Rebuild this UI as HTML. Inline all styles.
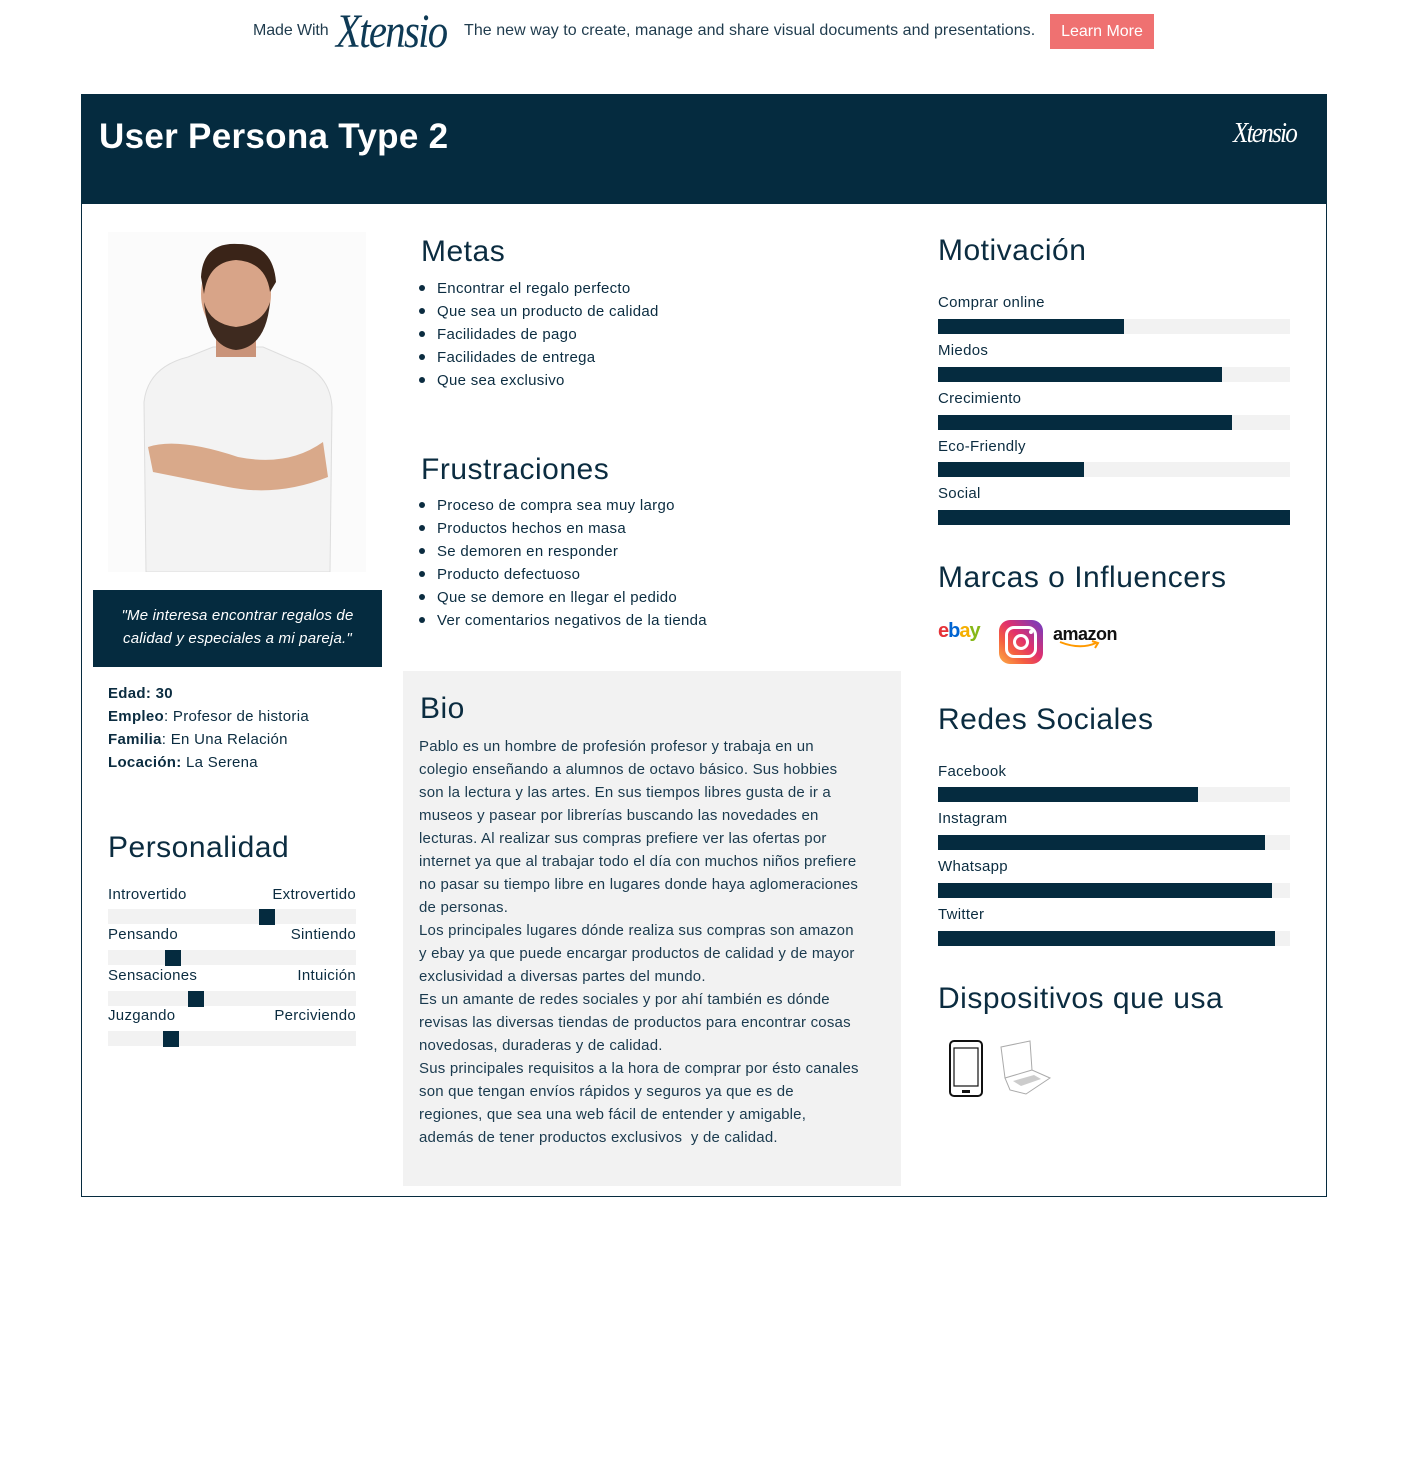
<!DOCTYPE html>
<html><head><meta charset="utf-8">
<style>
*{margin:0;padding:0;box-sizing:border-box}
body{width:1407px;height:1463px;background:#fff;font-family:"Liberation Sans",sans-serif;color:#0b2c40;position:relative;overflow:hidden}
.a{position:absolute}
.top{font-size:16px;color:#1f3b4d;letter-spacing:-0.1px}
.card{left:81px;top:94px;width:1246px;height:1103px;border:1px solid #062b3f}
.hdr{left:81px;top:94px;width:1246px;height:110px;background:#052b3f}
h2{position:absolute;font-weight:normal;font-size:30px;letter-spacing:0.5px;color:#0b2c40}
ul{position:absolute;list-style:none;font-size:15px;letter-spacing:0.3px}
ul li{height:23px;line-height:23px;padding-left:18px;position:relative}
ul li:before{content:"";position:absolute;left:0;top:8px;width:6px;height:6px;border-radius:50%;background:#0b2c40}
.lbl{position:absolute;font-size:15px;letter-spacing:0.3px}
.r{text-align:right;width:150px}
.bar{position:absolute;height:15px;background:#f2f2f2;width:352px;left:938px}
.bar i{position:absolute;left:0;top:0;bottom:0;background:#052b3f}
.sl{position:absolute;left:108px;width:248px;height:15px;background:#f2f2f2}
.sl i{position:absolute;top:0;width:16px;height:16px;background:#052b3f}
.bio{white-space:nowrap;font-size:15px;line-height:23px;letter-spacing:0.2px;color:#1a3a4e}
</style></head><body>
<div class="a top" style="left:253px;top:22px">Made With</div>
<div class="a" style="left:336px;top:4px;font-family:'Liberation Serif',serif;font-style:italic;font-size:48px;color:#0e3a55;letter-spacing:-2px;transform:scaleX(0.85);transform-origin:left">Xtensio</div>
<div class="a top" style="left:464px;top:22px;letter-spacing:0.05px">The new way to create, manage and share visual documents and presentations.</div>
<div class="a" style="left:1050px;top:14px;width:104px;height:35px;background:#ef7171;color:#fff;font-size:16px;line-height:35px;text-align:center">Learn More</div>

<div class="a card"></div>
<div class="a hdr"></div>
<div class="a" style="left:99px;top:117px;color:#fff;font-size:35px;font-weight:bold;letter-spacing:0.3px">User Persona Type 2</div>
<div class="a" style="left:1233px;top:118px;color:#fff;font-family:'Liberation Serif',serif;font-style:italic;font-size:28px;letter-spacing:-2px;transform:scaleX(0.9);transform-origin:left">Xtensio</div>

<div class="a" style="left:108px;top:232px;width:258px;height:340px;background:#fbfbfb">
<svg width="258" height="340" viewBox="0 0 258 340">
<path d="M38 340 L36 170 Q40 135 80 125 L105 115 L155 115 L185 128 Q222 140 224 175 L222 340Z" fill="#f3f3f3" stroke="#ddd"/>
<path d="M40 215 Q70 205 130 225 Q180 235 215 210 L220 245 Q170 265 120 255 Q70 245 45 240Z" fill="#d9a98a"/>
<rect x="108" y="85" width="40" height="40" fill="#c99379"/>
<ellipse cx="128" cy="62" rx="35" ry="45" fill="#d8a488"/>
<path d="M93 45 Q95 10 130 12 Q165 12 168 50 L162 60 Q158 30 128 28 Q100 30 96 62Z" fill="#3a2418"/>
<path d="M96 70 Q100 115 128 118 Q158 115 162 70 Q155 92 128 95 Q102 92 96 70Z" fill="#3e2a1f"/>
</svg></div>
<div class="a" style="left:93px;top:590px;width:289px;height:77px;background:#052b3f;color:#fff;font-style:italic;font-size:15px;line-height:23px;text-align:center;padding-top:14px;letter-spacing:0.2px">"Me interesa encontrar regalos de<br>calidad y especiales a mi pareja."</div>
<div class="a" style="left:108px;top:682px;font-size:15px;line-height:23px;letter-spacing:0.3px">
<b>Edad: 30</b><br><b>Empleo</b>: Profesor de historia<br><b>Familia</b>: En Una Relación<br><b>Locación:</b> La Serena</div>

<h2 style="left:108px;top:831px">Personalidad</h2>
<div class="lbl" style="left:108px;top:886px">Introvertido</div><div class="lbl r" style="left:206px;top:886px">Extrovertido</div>
<div class="sl" style="top:909px"><i style="left:151px"></i></div>
<div class="lbl" style="left:108px;top:926px">Pensando</div><div class="lbl r" style="left:206px;top:926px">Sintiendo</div>
<div class="sl" style="top:950px"><i style="left:57px"></i></div>
<div class="lbl" style="left:108px;top:967px">Sensaciones</div><div class="lbl r" style="left:206px;top:967px">Intuición</div>
<div class="sl" style="top:991px"><i style="left:80px"></i></div>
<div class="lbl" style="left:108px;top:1007px">Juzgando</div><div class="lbl r" style="left:206px;top:1007px">Perciviendo</div>
<div class="sl" style="top:1031px"><i style="left:55px"></i></div>

<h2 style="left:421px;top:235px">Metas</h2>
<ul style="left:419px;top:277px"><li>Encontrar el regalo perfecto</li><li>Que sea un producto de calidad</li><li>Facilidades de pago</li><li>Facilidades de entrega</li><li>Que sea exclusivo</li></ul>
<h2 style="left:421px;top:453px">Frustraciones</h2>
<ul style="left:419px;top:494px"><li>Proceso de compra sea muy largo</li><li>Productos hechos en masa</li><li>Se demoren en responder</li><li>Producto defectuoso</li><li>Que se demore en llegar el pedido</li><li>Ver comentarios negativos de la tienda</li></ul>
<div class="a" style="left:403px;top:671px;width:498px;height:515px;background:#f2f2f2"></div>
<h2 style="left:420px;top:692px">Bio</h2>
<div class="a bio" style="left:419px;top:735px">Pablo es un hombre de profesión profesor y trabaja en un<br>colegio enseñando a alumnos de octavo básico. Sus hobbies<br>son la lectura y las artes. En sus tiempos libres gusta de ir a<br>museos y pasear por librerías buscando las novedades en<br>lecturas. Al realizar sus compras prefiere ver las ofertas por<br>internet ya que al trabajar todo el día con muchos niños prefiere<br>no pasar su tiempo libre en lugares donde haya aglomeraciones<br>de personas.<br>Los principales lugares dónde realiza sus compras son amazon<br>y ebay ya que puede encargar productos de calidad y de mayor<br>exclusividad a diversas partes del mundo.<br>Es un amante de redes sociales y por ahí también es dónde<br>revisas las diversas tiendas de productos para encontrar cosas<br>novedosas, duraderas y de calidad.<br>Sus principales requisitos a la hora de comprar por ésto canales<br>son que tengan envíos rápidos y seguros ya que es de<br>regiones, que sea una web fácil de entender y amigable,<br>además de tener productos exclusivos&nbsp; y de calidad.</div>

<h2 style="left:938px;top:234px">Motivación</h2>
<div class="lbl" style="left:938px;top:294px">Comprar online</div><div class="bar" style="top:319px"><i style="width:186px"></i></div>
<div class="lbl" style="left:938px;top:342px">Miedos</div><div class="bar" style="top:367px"><i style="width:284px"></i></div>
<div class="lbl" style="left:938px;top:390px">Crecimiento</div><div class="bar" style="top:415px"><i style="width:294px"></i></div>
<div class="lbl" style="left:938px;top:438px">Eco-Friendly</div><div class="bar" style="top:462px"><i style="width:146px"></i></div>
<div class="lbl" style="left:938px;top:485px">Social</div><div class="bar" style="top:510px"><i style="width:352px"></i></div>

<h2 style="left:938px;top:561px">Marcas o Influencers</h2>
<div class="a" style="left:938px;top:620px;font-size:20px;font-weight:bold;letter-spacing:-1px"><span style="color:#e53238">e</span><span style="color:#0064d2">b</span><span style="color:#f5af02">a</span><span style="color:#86b817">y</span></div>
<div class="a" style="left:999px;top:620px;width:44px;height:44px;border-radius:11px;background:linear-gradient(45deg,#fcaf45,#f56040 30%,#e1306c 55%,#833ab4 90%)">
<div class="a" style="left:6px;top:6px;width:32px;height:32px;border:3px solid #fff;border-radius:9px"></div>
<div class="a" style="left:14px;top:14px;width:16px;height:16px;border:3px solid #fff;border-radius:50%"></div>
<div class="a" style="left:30px;top:10px;width:4px;height:4px;background:#fff;border-radius:50%"></div></div>
<div class="a" style="left:1053px;top:624px;font-size:18px;font-weight:bold;color:#111;letter-spacing:-0.5px">amazon</div>
<svg class="a" style="left:1058px;top:640px" width="44" height="10"><path d="M2 2 Q22 10 38 3" stroke="#f90" stroke-width="2" fill="none"/><path d="M34 1 L40 3 L37 8" stroke="#f90" stroke-width="2" fill="none"/></svg>

<h2 style="left:938px;top:703px">Redes Sociales</h2>
<div class="lbl" style="left:938px;top:763px">Facebook</div><div class="bar" style="top:787px"><i style="width:260px"></i></div>
<div class="lbl" style="left:938px;top:810px">Instagram</div><div class="bar" style="top:835px"><i style="width:327px"></i></div>
<div class="lbl" style="left:938px;top:858px">Whatsapp</div><div class="bar" style="top:883px"><i style="width:334px"></i></div>
<div class="lbl" style="left:938px;top:906px">Twitter</div><div class="bar" style="top:931px"><i style="width:337px"></i></div>

<h2 style="left:938px;top:982px">Dispositivos que usa</h2>
<svg class="a" style="left:948px;top:1040px" width="110" height="58">
<rect x="2" y="1" width="32" height="55" rx="4" fill="none" stroke="#111" stroke-width="2"/>
<rect x="6" y="8" width="24" height="38" fill="none" stroke="#111" stroke-width="1.2"/>
<rect x="14" y="50" width="8" height="3" fill="#111"/>
<path d="M53 7 L82 1 L84 30 L57 38Z M57 38 L84 30 L102 38 L78 54 L62 50Z" fill="none" stroke="#aaa" stroke-width="1"/>
<path d="M65 41 L86 35 L93 39 L73 46Z" fill="#ccc"/>
</svg>
</body></html>
